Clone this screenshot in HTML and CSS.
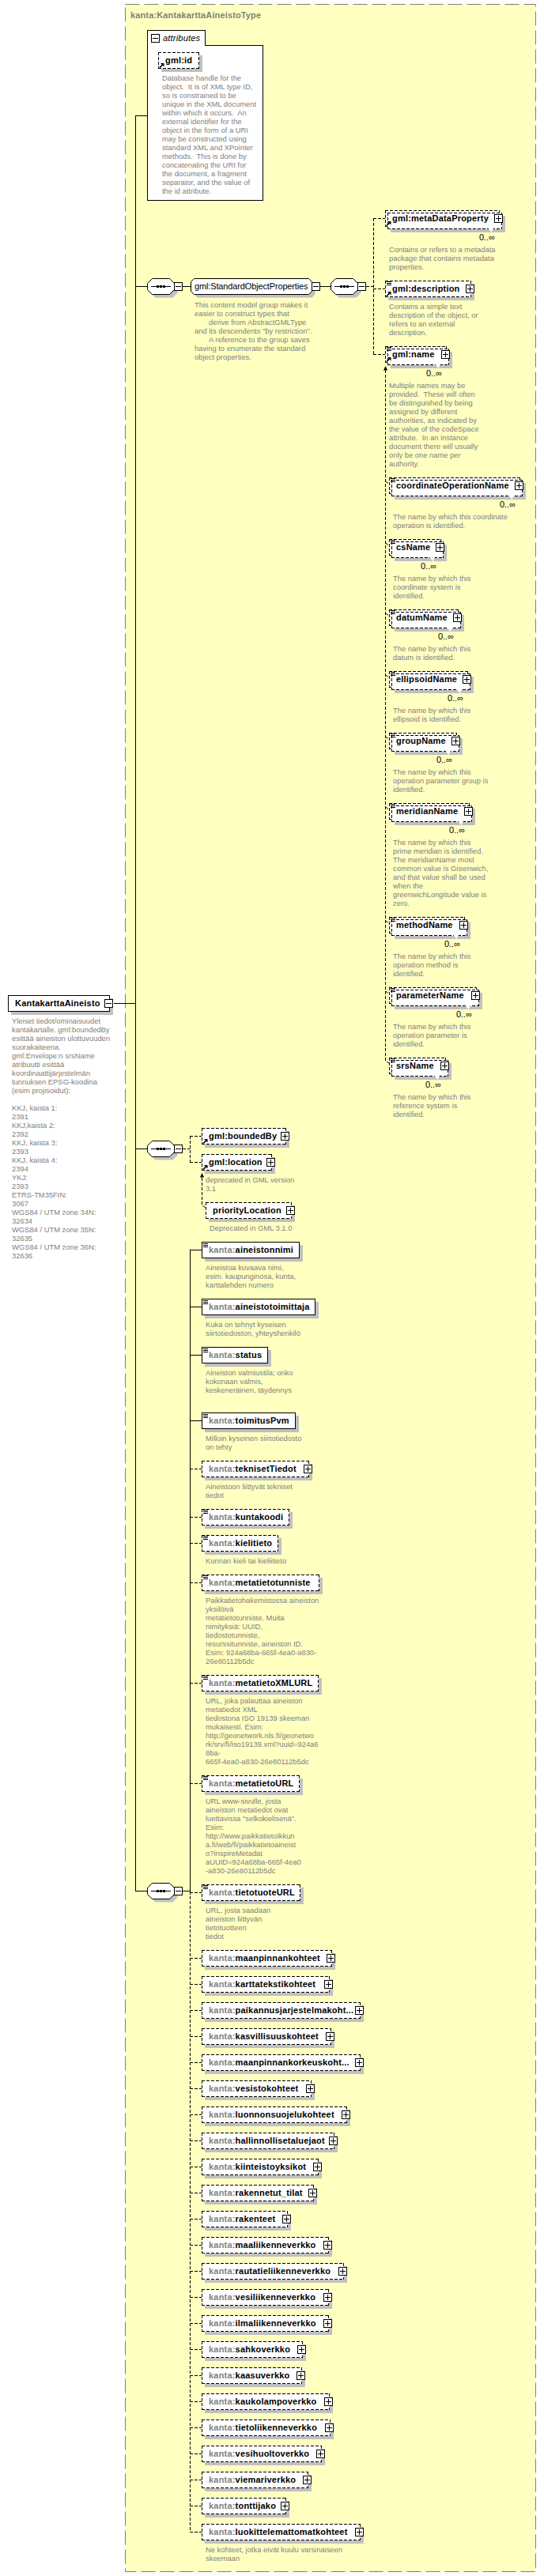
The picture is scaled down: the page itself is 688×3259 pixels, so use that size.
FILE: index.html
```html
<!DOCTYPE html>
<html lang="fi">
<head>
<meta charset="utf-8">
<title>KantakarttaAineisto</title>
<link rel="stylesheet" href="styles.css">
</head>
<body>
<div class="canvas">
<svg class="wires" width="688" height="3259" viewBox="0 0 688 3259">
<defs>
<symbol id="hex" viewBox="0 0 40 26">
<path class="hex-shadow" d="M10.5 4.5H32.5L38.5 10.5V18.5L32.5 24.5H10.5L4.5 18.5V10.5Z"/>
<path class="hex-face" d="M6.5 .5H28.5L34.5 6.5V14.5L28.5 20.5H6.5L.5 14.5V6.5Z"/>
<path class="wire" d="M5 10.5H30"/>
<path class="ink" d="M12 9h3v3h-3zM16 9h3v3h-3zM20 9h3v3h-3z"/>
</symbol>
<symbol id="ref" viewBox="0 0 7 7">
<path class="ref-line" d="M1 6.5L4.5 3"/>
<path class="ink" d="M2 1H6.5V5.5Z"/>
</symbol>
</defs>
<rect class="type-box" x="158.5" y="5.5" width="519" height="3248"/>
<path class="wire" d="M171.5 146V2393M171 146.5H186M144 1269.5H171M171 362.5H186M231 362.5H241M404 362.5H418M171 1453.5H186M171 2392.5H186M231 2392.5H241M240.5 1581V2393M240 1581.5H255M240 1653.5H255M240 1714.5H255M240 1797.5H255"/>
<path class="wire dash" d="M231 1453.5H240M240.5 1437V1471M240 1437.5H255M240 1470.5H255M463 362.5H472M472.5 276V449M472 276.5H487M472 365.5H487M472 448.5H487M487.5 468V1342L492 1345M487.5 609L492 612M487.5 687L492 690M487.5 776L492 779M487.5 854L492 857M487.5 932L492 935M487.5 1021L492 1024M487.5 1165L492 1168M487.5 1254L492 1257M255.5 1490V1525L260 1528M240.5 2393V3203.5H255M240 1858.5H255M240 1919.5H255M240 1952.5H255M240 2002.5H255M240 2129.5H255M240 2256.5H255M240 2394.5H255M240 2477.5H255M240 2510.5H255M240 2543.5H255M240 2576.5H255M240 2609.5H255M240 2642.5H255M240 2675.5H255M240 2708.5H255M240 2741.5H255M240 2774.5H255M240 2807.5H255M240 2840.5H255M240 2873.5H255M240 2906.5H255M240 2939.5H255M240 2972.5H255M240 3005.5H255M240 3038.5H255M240 3071.5H255M240 3104.5H255M240 3137.5H255M240 3170.5H255"/>
<path class="ink" d="M487.5 463L490 468.5H485ZM255.5 1484L258 1489.5H253Z"/>
</svg>

<div class="title">kanta:KantakarttaAineistoType</div>

<div class="attr-body" style="left:186px;top:57px;width:147px;height:197px"></div>
<div class="attr-tab" style="left:186px;top:38px;width:74px;height:20px"><i class="toggle minus"></i>attributes</div>

<div class="node dashed" style="left:200px;top:66px;width:52px"><svg class="ref"><use href="#ref"/></svg>gml:id</div>
<p class="doc" style="left:205px;top:93px">Database handle for the
object.  It is of XML type ID,
so is constrained to be
unique in the XML document
within which it occurs.  An
external identifier for the
object in the form of a URI
may be constructed using
standard XML and XPointer
methods.  This is done by
concatenating the URI for
the document, a fragment
separator, and the value of
the id attribute.</p>

<div class="seq" style="left:186px;top:352px"><svg class="hex"><use href="#hex"/></svg><i class="toggle minus"></i></div>
<div class="group" style="left:241px;top:352px"><svg class="group-shape" width="158" height="26"><path class="hex-shadow" d="M8.5 4.5H153.5L157.5 8.5V20.5L153.5 24.5H8.5L4.5 20.5V8.5Z"/><path class="hex-face" d="M4.5 .5H149.5L153.5 4.5V16.5L149.5 20.5H4.5L.5 16.5V4.5Z"/></svg><span class="group-name">gml:StandardObjectProperties</span><i class="toggle minus"></i></div>
<p class="doc" style="left:246px;top:380px">This content model group makes it
easier to construct types that
<span class="indent">derive from AbstractGMLType</span>
and its descendents "by restriction".
<span class="indent">A reference to the group saves</span>
having to enumerate the standard
object properties.</p>
<div class="seq" style="left:418px;top:352px"><svg class="hex"><use href="#hex"/></svg><i class="toggle minus"></i></div>

<div class="node dashed rep" style="left:487px;top:266px;width:145px"><svg class="ref"><use href="#ref"/></svg>gml:metaDataProperty<i class="toggle plus"></i><span class="mult">0..∞</span></div>
<p class="doc" style="left:492px;top:310px">Contains or refers to a metadata
package that contains metadata
properties.</p>
<div class="node dashed" style="left:487px;top:355px;width:109px"><i class="lines"></i><svg class="ref"><use href="#ref"/></svg>gml:description<i class="toggle plus"></i></div>
<p class="doc" style="left:492px;top:382px">Contains a simple text
description of the object, or
refers to an external
description.</p>
<div class="node dashed rep" style="left:487px;top:438px;width:78px"><i class="lines"></i><svg class="ref"><use href="#ref"/></svg>gml:name<i class="toggle plus"></i><span class="mult">0..∞</span></div>
<p class="doc" style="left:492px;top:482px">Multiple names may be
provided.  These will often
be distinguished by being
assigned by different
authorities, as indicated by
the value of the codeSpace
attribute.  In an instance
document there will usually
only be one name per
authority.</p>

<div class="node dashed rep" style="left:492px;top:604px;width:166px"><i class="lines"></i>coordinateOperationName<i class="toggle plus"></i><span class="mult">0..∞</span></div>
<p class="doc" style="left:497px;top:648px">The name by which this coordinate
operation is identified.</p>
<div class="node dashed rep" style="left:492px;top:682px;width:66px"><i class="lines"></i>csName<i class="toggle plus"></i><span class="mult">0..∞</span></div>
<p class="doc" style="left:497px;top:726px">The name by which this
coordinate system is
identified.</p>
<div class="node dashed rep" style="left:492px;top:771px;width:88px"><i class="lines"></i>datumName<i class="toggle plus"></i><span class="mult">0..∞</span></div>
<p class="doc" style="left:497px;top:815px">The name by which this
datum is identified.</p>
<div class="node dashed rep" style="left:492px;top:849px;width:100px"><i class="lines"></i>ellipsoidName<i class="toggle plus"></i><span class="mult">0..∞</span></div>
<p class="doc" style="left:497px;top:893px">The name by which this
ellipsoid is identified.</p>
<div class="node dashed rep" style="left:492px;top:927px;width:86px"><i class="lines"></i>groupName<i class="toggle plus"></i><span class="mult">0..∞</span></div>
<p class="doc" style="left:497px;top:971px">The name by which this
operation parameter group is
identified.</p>
<div class="node dashed rep" style="left:492px;top:1016px;width:102px"><i class="lines"></i>meridianName<i class="toggle plus"></i><span class="mult">0..∞</span></div>
<p class="doc" style="left:497px;top:1060px">The name by which this
prime meridian is identified.
The meridianName most
common value is Greenwich,
and that value shall be used
when the
greenwichLongitude value is
zero.</p>
<div class="node dashed rep" style="left:492px;top:1160px;width:96px"><i class="lines"></i>methodName<i class="toggle plus"></i><span class="mult">0..∞</span></div>
<p class="doc" style="left:497px;top:1204px">The name by which this
operation method is
identified.</p>
<div class="node dashed rep" style="left:492px;top:1249px;width:111px"><i class="lines"></i>parameterName<i class="toggle plus"></i><span class="mult">0..∞</span></div>
<p class="doc" style="left:497px;top:1293px">The name by which this
operation parameter is
identified.</p>
<div class="node dashed rep" style="left:492px;top:1338px;width:72px"><i class="lines"></i>srsName<i class="toggle plus"></i><span class="mult">0..∞</span></div>
<p class="doc" style="left:497px;top:1382px">The name by which this
reference system is
identified.</p>

<div class="node solid root" style="left:10px;top:1259px;width:129px">KantakarttaAineisto<i class="toggle minus"></i></div>
<p class="doc" style="left:15px;top:1286px">Yleiset tiedot/ominaisuudet
kantakartalle. gml:boundedBy
esittää aineiston ulottuvuuden
suorakaiteena.
gml:Envelope:n srsName
atribuutti esittää
koordinaattijärjestelmän
tunnuksen EPSG-koodina
(esim projisoidut):

KKJ, kaista 1:
2391
KKJ,kaista 2:
2392
KKJ, kaista 3:
2393
KKJ, kaista 4:
2394
YKJ:
2393
ETRS-TM35FIN:
3067
WGS84 / UTM zone 34N:
32634
WGS84 / UTM zone 35N:
32635
WGS84 / UTM zone 36N:
32636</p>

<div class="seq" style="left:186px;top:1443px"><svg class="hex"><use href="#hex"/></svg><i class="toggle minus"></i></div>
<div class="node dashed" style="left:255px;top:1427px;width:107px"><svg class="ref"><use href="#ref"/></svg>gml:boundedBy<i class="toggle plus"></i></div>
<div class="node dashed" style="left:255px;top:1460px;width:89px"><svg class="ref"><use href="#ref"/></svg>gml:location<i class="toggle plus"></i></div>
<p class="doc" style="left:260px;top:1487px">deprecated in GML version
3.1</p>
<div class="node dashed" style="left:260px;top:1521px;width:109px">priorityLocation<i class="toggle plus"></i></div>
<p class="doc" style="left:265px;top:1548px">Deprecated in GML 3.1.0</p>

<div class="node solid" style="left:255px;top:1571px;width:124px"><i class="lines"></i><span class="ns">kanta:</span>aineistonnimi</div>
<p class="doc" style="left:260px;top:1598px">Aineistoa kuvaava nimi,
esim. kaupunginosa, kunta,
karttalehden numero</p>
<div class="node solid" style="left:255px;top:1643px;width:144px"><i class="lines"></i><span class="ns">kanta:</span>aineistotoimittaja</div>
<p class="doc" style="left:260px;top:1670px">Kuka on tehnyt kyseisen
siirtotiedoston, yhteyshenkilö</p>
<div class="node solid" style="left:255px;top:1704px;width:84px"><i class="lines"></i><span class="ns">kanta:</span>status</div>
<p class="doc" style="left:260px;top:1731px">Aineiston valmiustila; onko
kokonaan valmis,
keskeneräinen, täydennys</p>
<div class="node solid" style="left:255px;top:1787px;width:119px"><i class="lines"></i><span class="ns">kanta:</span>toimitusPvm</div>
<p class="doc" style="left:260px;top:1814px">Milloin kyseinen siirtotiedosto
on tehty</p>
<div class="node dashed" style="left:255px;top:1848px;width:136px"><span class="ns">kanta:</span>teknisetTiedot<i class="toggle plus"></i></div>
<p class="doc" style="left:260px;top:1875px">Aineistoon liittyvät tekniset
tiedot</p>
<div class="node dashed" style="left:255px;top:1909px;width:111px"><i class="lines"></i><span class="ns">kanta:</span>kuntakoodi</div>
<div class="node dashed" style="left:255px;top:1942px;width:97px"><i class="lines"></i><span class="ns">kanta:</span>kielitieto</div>
<p class="doc" style="left:260px;top:1969px">Kunnan kieli tai kieliitieto</p>
<div class="node dashed" style="left:255px;top:1992px;width:149px"><i class="lines"></i><span class="ns">kanta:</span>metatietotunniste</div>
<p class="doc" style="left:260px;top:2019px">Paikkatietohakemistossa aineiston
yksilöivä
metatietotunniste. Muita
nimityksiä: UUID,
tiedostotunniste,
resurssitunniste, aineiston ID.
Esim: 924a68ba-665f-4ea0-a830-
26e80112b5dc</p>
<div class="node dashed" style="left:255px;top:2119px;width:148px"><i class="lines"></i><span class="ns">kanta:</span>metatietoXMLURL</div>
<p class="doc" style="left:260px;top:2146px">URL, joka palauttaa aineiston
metatiedot XML
tiedostona ISO 19139 skeeman
mukaisesti. Esim:
http://geonetwork.nls.fi/geonetwo
rk/srv/fi/iso19139.xml?uuid=924a6
8ba-
665f-4ea0-a830-26e80112b5dc</p>
<div class="node dashed" style="left:255px;top:2246px;width:124px"><i class="lines"></i><span class="ns">kanta:</span>metatietoURL</div>
<p class="doc" style="left:260px;top:2273px">URL www-sivulle, josta
aineiston metatiedot ovat
luettavissa "selkokielisenä".
Esim:
http://www.paikkatietoikkun
a.fi/web/fi/paikkatietoaineist
o?inspireMetadat
aUUID=924a68ba-665f-4ea0
-a830-26e80112b5dc</p>

<div class="seq" style="left:186px;top:2382px"><svg class="hex"><use href="#hex"/></svg><i class="toggle minus"></i></div>
<div class="node dashed" style="left:255px;top:2384px;width:125px"><i class="lines"></i><span class="ns">kanta:</span>tietotuoteURL</div>
<p class="doc" style="left:260px;top:2411px">URL, josta saadaan
aineiston liittyvän
tietotuotteen
tiedot</p>

<div class="node dashed" style="left:255px;top:2467px;width:165px"><span class="ns">kanta:</span>maanpinnankohteet<i class="toggle plus"></i></div>
<div class="node dashed" style="left:255px;top:2500px;width:162px"><span class="ns">kanta:</span>karttatekstikohteet<i class="toggle plus"></i></div>
<div class="node dashed" style="left:255px;top:2533px;width:201px"><span class="ns">kanta:</span>paikannusjarjestelmakoht...<i class="toggle plus"></i></div>
<div class="node dashed" style="left:255px;top:2566px;width:164px"><span class="ns">kanta:</span>kasvillisuuskohteet<i class="toggle plus"></i></div>
<div class="node dashed" style="left:255px;top:2599px;width:201px"><span class="ns">kanta:</span>maanpinnankorkeuskoht...<i class="toggle plus"></i></div>
<div class="node dashed" style="left:255px;top:2632px;width:139px"><span class="ns">kanta:</span>vesistokohteet<i class="toggle plus"></i></div>
<div class="node dashed" style="left:255px;top:2665px;width:184px"><span class="ns">kanta:</span>luonnonsuojelukohteet<i class="toggle plus"></i></div>
<div class="node dashed" style="left:255px;top:2698px;width:168px"><span class="ns">kanta:</span>hallinnollisetaluejaot<i class="toggle plus"></i></div>
<div class="node dashed" style="left:255px;top:2731px;width:148px"><span class="ns">kanta:</span>kiinteistoyksikot<i class="toggle plus"></i></div>
<div class="node dashed" style="left:255px;top:2764px;width:142px"><span class="ns">kanta:</span>rakennetut_tilat<i class="toggle plus"></i></div>
<div class="node dashed" style="left:255px;top:2797px;width:109px"><span class="ns">kanta:</span>rakenteet<i class="toggle plus"></i></div>
<div class="node dashed" style="left:255px;top:2830px;width:161px"><span class="ns">kanta:</span>maaliikenneverkko<i class="toggle plus"></i></div>
<div class="node dashed" style="left:255px;top:2863px;width:180px"><span class="ns">kanta:</span>rautatieliikenneverkko<i class="toggle plus"></i></div>
<div class="node dashed" style="left:255px;top:2896px;width:161px"><span class="ns">kanta:</span>vesiliikenneverkko<i class="toggle plus"></i></div>
<div class="node dashed" style="left:255px;top:2929px;width:161px"><span class="ns">kanta:</span>ilmaliikenneverkko<i class="toggle plus"></i></div>
<div class="node dashed" style="left:255px;top:2962px;width:128px"><span class="ns">kanta:</span>sahkoverkko<i class="toggle plus"></i></div>
<div class="node dashed" style="left:255px;top:2995px;width:127px"><span class="ns">kanta:</span>kaasuverkko<i class="toggle plus"></i></div>
<div class="node dashed" style="left:255px;top:3028px;width:162px"><span class="ns">kanta:</span>kaukolampoverkko<i class="toggle plus"></i></div>
<div class="node dashed" style="left:255px;top:3061px;width:163px"><span class="ns">kanta:</span>tietoliikenneverkko<i class="toggle plus"></i></div>
<div class="node dashed" style="left:255px;top:3094px;width:152px"><span class="ns">kanta:</span>vesihuoltoverkko<i class="toggle plus"></i></div>
<div class="node dashed" style="left:255px;top:3127px;width:135px"><span class="ns">kanta:</span>viemariverkko<i class="toggle plus"></i></div>
<div class="node dashed" style="left:255px;top:3160px;width:107px"><span class="ns">kanta:</span>tonttijako<i class="toggle plus"></i></div>
<div class="node dashed" style="left:255px;top:3193px;width:201px"><span class="ns">kanta:</span>luokittelemattomatkohteet<i class="toggle plus"></i></div>
<p class="doc" style="left:260px;top:3220px">Ne kohteet, jotka eivät kuulu varsinaiseen
skeemaan</p>
</div>
</body>
</html>
```
FILE: styles.css
```css
html, body {
  margin: 0;
  padding: 0;
  background: #fff;
}

.canvas {
  position: relative;
  width: 688px;
  height: 3259px;
  overflow: hidden;
  font-family: "Liberation Sans", Arial, sans-serif;
  color: #000;
}

.wires {
  position: absolute;
  left: 0;
  top: 0;
}

.type-box {
  fill: #ffffc0;
  stroke: #808080;
  stroke-width: 1;
  stroke-dasharray: 18 6;
}

.wire {
  fill: none;
  stroke: #000;
  stroke-width: 1;
}

.wire.dash {
  stroke-dasharray: 4 2;
}

.ink {
  fill: #000;
}

.hex-face {
  fill: #fff;
  stroke: #000;
  stroke-width: 1;
}

.hex-shadow {
  fill: #c0c0c0;
}

.ref-line {
  fill: none;
  stroke: #000;
  stroke-width: 1.6;
}

.title {
  position: absolute;
  left: 165px;
  top: 12px;
  font-size: 11px;
  line-height: 14px;
  font-weight: 700;
  letter-spacing: .14px;
  color: #808080;
  white-space: nowrap;
}

.attr-body {
  position: absolute;
  box-sizing: border-box;
  background: #fff;
  border: 1px solid #000;
}

.attr-tab {
  position: absolute;
  box-sizing: border-box;
  background: #fff;
  border: 1px solid #000;
  border-bottom: 0;
  padding-left: 19px;
  font-size: 11px;
  font-style: italic;
  line-height: 19px;
  letter-spacing: .2px;
  white-space: nowrap;
}

.attr-tab .toggle {
  left: 4px;
  top: 4px;
}

.node {
  position: absolute;
  box-sizing: border-box;
  height: 21px;
  z-index: 0;
  font-size: 11px;
  font-weight: 700;
  line-height: 21px;
  letter-spacing: .2px;
  white-space: nowrap;
  box-shadow: 4px 4px 0 #c0c0c0;
}

.solid {
  border: 1px solid #000;
  background: #fff;
  padding-left: 8px;
  line-height: 19px;
}

.dashed,
.rep::before {
  background:
    repeating-linear-gradient(90deg, #000 0 4px, transparent 4px 6px) 0 0 / 100% 1px no-repeat,
    repeating-linear-gradient(90deg, #000 0 4px, transparent 4px 6px) 0 100% / 100% 1px no-repeat,
    repeating-linear-gradient(180deg, #000 0 4px, transparent 4px 6px) 0 0 / 1px 100% no-repeat,
    repeating-linear-gradient(180deg, #000 0 4px, transparent 4px 6px) 100% 0 / 1px 100% no-repeat,
    #fff;
}

.dashed {
  padding-left: 9px;
}

.rep {
  box-shadow: none;
}

.rep::before {
  content: "";
  position: absolute;
  left: 3px;
  top: 3px;
  right: -3px;
  bottom: -3px;
  z-index: -1;
  box-shadow: 4px 4px 0 #c0c0c0;
}

.rep::after {
  content: "";
  position: absolute;
  right: 7px;
  bottom: -7px;
  width: 9px;
  height: 7px;
  background: #fff;
  clip-path: polygon(0 0, 100% 0, 60% 100%);
}

.ns {
  color: #808080;
}

.lines {
  position: absolute;
  left: 2px;
  top: 1px;
  width: 6px;
  height: 5px;
  background: repeating-linear-gradient(180deg, #000 0 1px, transparent 1px 2px);
}

.solid .lines {
  left: 1px;
  top: 1px;
}

.ref {
  position: absolute;
  left: 1px;
  top: 13px;
  width: 7px;
  height: 7px;
}

.toggle {
  position: absolute;
  box-sizing: border-box;
  right: -4px;
  top: 5px;
  width: 11px;
  height: 11px;
  background: #fff;
  border: 1px solid #000;
}

.root .toggle {
  right: -5px;
  top: 4px;
}

.toggle::before {
  content: "";
  position: absolute;
  left: 1px;
  top: 4px;
  width: 7px;
  height: 1px;
  background: #000;
}

.plus::after {
  content: "";
  position: absolute;
  left: 4px;
  top: 1px;
  width: 1px;
  height: 7px;
  background: #000;
}

.mult {
  position: absolute;
  right: 6px;
  top: 29px;
  font-size: 11px;
  font-weight: 400;
  line-height: 11px;
  letter-spacing: 0;
}

.doc {
  position: absolute;
  margin: 0;
  font-size: 9.4px;
  line-height: 11px;
  color: #808080;
  white-space: pre;
}

.indent {
  margin-left: 18px;
}

.seq {
  position: absolute;
  width: 46px;
  height: 21px;
}

.hex {
  display: block;
  width: 40px;
  height: 26px;
}

.seq .toggle {
  left: 34px;
  right: auto;
}

.group {
  position: absolute;
  width: 153px;
  height: 21px;
}

.group-shape {
  position: absolute;
  left: 0;
  top: 0;
}

.group-name {
  position: absolute;
  left: 5px;
  top: 0;
  font-size: 11px;
  line-height: 21px;
  letter-spacing: -.14px;
  white-space: nowrap;
}

.group .toggle {
  left: 153px;
  right: auto;
}
```
